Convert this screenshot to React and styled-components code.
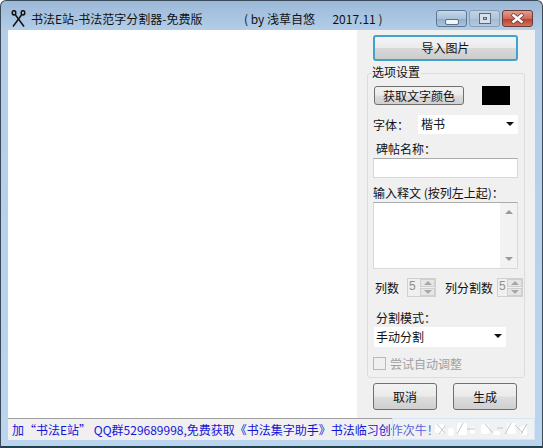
import styled, { createGlobalStyle } from 'styled-components';

const Global = createGlobalStyle`
    html, body {
        margin: 0;
        padding: 0;
        background: #ffffff;
    }
    * {
        box-sizing: border-box;
    }
`;

const FONT = `"Noto Sans CJK SC", "Liberation Sans", sans-serif`;

function Scissors() {
    return (
        <svg width="15" height="17" viewBox="0 0 15 17" fill="none" stroke="#111" strokeWidth="1.5">
            <path d="M2 16.5 L10.5 5" />
            <path d="M13 16.5 L4.5 5" />
            <ellipse cx="3" cy="2.8" rx="1.8" ry="2.1" />
            <ellipse cx="12" cy="2.8" rx="1.8" ry="2.1" />
        </svg>
    );
}

function CloseGlyph() {
    return (
        <svg width="15" height="11" viewBox="0 0 15 11">
            <path d="M2 1 L13 10 M13 1 L2 10" stroke="#6d3a33" strokeWidth="4" />
            <path d="M2.5 1.5 L12.5 9.5 M12.5 1.5 L2.5 9.5" stroke="#ffffff" strokeWidth="2.6" />
        </svg>
    );
}

function Arrow({ up, color = "#111" }) {
    return (
        <svg width="8" height="4" viewBox="0 0 8 4">
            <path d={up ? "M4 0 L8 4 L0 4 Z" : "M0 0 L8 0 L4 4 Z"} fill={color} />
        </svg>
    );
}

function Spinner({ value, width }) {
    return (
        <Spin $width={width}>
            <SpinValue>{value}</SpinValue>
            <SpinButtons>
                <SpinButton><Arrow up color="#a8a8a8" /></SpinButton>
                <SpinButton><Arrow color="#a8a8a8" /></SpinButton>
            </SpinButtons>
        </Spin>
    );
}

// 水印的模糊字迹
function Smudge() {
    const marks = [
        [12, 5, 9, 9], [25, 9, 6, 8], [34, 4, 10, 12], [47, 8, 5, 7],
        [58, 5, 8, 10], [70, 12, 7, 4], [84, 4, 9, 11], [97, 7, 7, 9],
    ];
    return (
        <svg width="141" height="20" viewBox="0 0 141 20">
            {marks.map(([x, y, w, h]) => (
                <rect key={x} x={x + 30} y={y} width={w} height={h} rx="2" fill="#ffffff" />
            ))}
            <path
                d="M44 5 L52 14 M52 7 L46 15 M70 4 L64 15 M74 10 L82 10 M92 5 L100 14 M104 9 L110 9 M118 4 L112 15 M122 6 L130 14 M134 5 L128 15"
                stroke="#c4c7cb"
                strokeWidth="1"
            />
        </svg>
    );
}

export default function App() {
    return (
        <>
            <Global />
            <Window>
                <TitleBar>
                    <Scissors />
                    <TitleText>书法E站-书法范字分割器-免费版</TitleText>
                    <TitleBy>( by 浅草自悠　  2017.11 )</TitleBy>
                    <Controls>
                        <Control><MinGlyph /></Control>
                        <Control $muted><MaxGlyph /></Control>
                        <CloseControl><CloseGlyph /></CloseControl>
                    </Controls>
                </TitleBar>
                <Client>
                    <Canvas />
                    <Panel>
                        <ImportButton>导入图片</ImportButton>
                        <Group>
                            <Legend>选项设置</Legend>
                            <ColorRow>
                                <ColorButton>获取文字颜色</ColorButton>
                                <Swatch />
                            </ColorRow>
                            <FontRow>
                                <FontLabel>字体：</FontLabel>
                                <Select $width="100px">
                                    楷书
                                    <Arrow />
                                </Select>
                            </FontRow>
                            <FieldLabel $indent="3px" $top="6px">碑帖名称：</FieldLabel>
                            <TextInput />
                            <FieldLabel $top="6px">输入释文 (按列左上起)：</FieldLabel>
                            <TextArea>
                                <Scrollbar>
                                    <Arrow up color="#9a9a9a" />
                                    <Arrow color="#9a9a9a" />
                                </Scrollbar>
                            </TextArea>
                            <SpinRow>
                                <SpinLabel>列数</SpinLabel>
                                <Spinner value="5" width="29px" />
                                <SpinLabel $left="9px">列分割数</SpinLabel>
                                <Spinner value="5" width="26px" />
                            </SpinRow>
                            <FieldLabel $indent="3px" $top="12px">分割模式：</FieldLabel>
                            <ModeSelect>
                                手动分割
                                <Arrow />
                            </ModeSelect>
                            <CheckRow>
                                <CheckBox />
                                尝试自动调整
                            </CheckRow>
                        </Group>
                        <Actions>
                            <ActionButton>取消</ActionButton>
                            <ActionButton>生成</ActionButton>
                        </Actions>
                    </Panel>
                    <Status>加“书法E站” QQ群529689998,免费获取《书法集字助手》书法临习创作次牛！</Status>
                    <Watermark><Smudge /></Watermark>
                </Client>
            </Window>
        </>
    );
}

const Window = styled.div`
    width: 543px;
    height: 448px;
    display: flex;
    flex-direction: column;
    padding: 0 7px 6px;
    border-radius: 6px 6px 0 0;
    border: 1px solid #3b4a58;
    border-bottom: 2px solid #23404f;
    background: linear-gradient(180deg, #9cb9d8 0%, #b4cee8 30px, #bcd5ee 100%);
    font-family: ${FONT};
    font-size: 12px;
    color: #111;
`;

const TitleBar = styled.div`
    height: 29px;
    flex: none;
    display: flex;
    align-items: center;
    padding-top: 6px;
    margin-left: 3px;
`;

const TitleText = styled.div`
    margin-left: 5px;
    width: 213px;
    white-space: nowrap;
`;

const TitleBy = styled.div`
    white-space: pre;
`;

const Controls = styled.div`
    margin-left: auto;
    margin-right: 2px;
    display: flex;
    gap: 2px;
`;

const Control = styled.div`
    width: 31px;
    height: 17px;
    border: 1px solid ${props => props.$muted ? "#8aa0b6" : "#5d7893"};
    border-radius: 3px;
    background: ${props => props.$muted
        ? "linear-gradient(180deg, #c2d3e4 0%, #b2c6da 50%, #a5bbd2 52%, #b2c8de 100%)"
        : "linear-gradient(180deg, #c6d8ea 0%, #a9c1da 50%, #93aecb 52%, #a8c3dd 100%)"};
    display: flex;
    align-items: center;
    justify-content: center;
`;

const MinGlyph = styled.div`
    width: 12px;
    height: 4px;
    margin-top: 6px;
    border-radius: 1px;
    background: #f2f5f9;
    outline: 1px solid #5d7086;
`;

const MaxGlyph = styled.div`
    width: 10px;
    height: 9px;
    border: 3px solid #d5e0eb;
    outline: 1px solid #56687d;
    box-shadow: inset 0 0 0 1px #56687d;
`;

const CloseControl = styled.div`
    width: 31px;
    height: 17px;
    border: 1px solid #6b3a34;
    border-radius: 3px;
    background: linear-gradient(180deg, #e0a08f 0%, #cf6a58 50%, #b83d2c 52%, #cf7561 100%);
    display: flex;
    align-items: center;
    justify-content: center;
`;

const Client = styled.div`
    position: relative;
    flex: 1;
    min-height: 0;
    display: grid;
    grid-template-columns: 349px 1fr;
    grid-template-rows: 1fr 22px;
    background: #f0f0f0;
`;

const Canvas = styled.div`
    background: #ffffff;
`;

const Panel = styled.div`
    grid-row: 1 / 3;
    padding: 5px 0 0 16px;
    display: flex;
    flex-direction: column;
    align-items: flex-start;
`;

const ImportButton = styled.button`
    width: 145px;
    height: 26px;
    flex: none;
    border: 2px solid #3fa3cc;
    border-radius: 3px;
    background: linear-gradient(180deg, #f4f4f4 0%, #ebebeb 48%, #d8d8d8 52%, #cdcdcd 100%);
    font: inherit;
    color: #111;
    padding: 0 0 2px;
`;

const Group = styled.div`
    position: relative;
    width: 158px;
    height: 305px;
    margin: 12px 0 0 -6px;
    padding: 12px 0 0 5px;
    border: 1px solid #dcdcdc;
    border-radius: 3px;
    display: flex;
    flex-direction: column;
    align-items: flex-start;
`;

const Legend = styled.div`
    position: absolute;
    top: -11px;
    left: 4px;
    background: #f0f0f0;
    padding-right: 1px;
    line-height: 17px;
`;

const ColorRow = styled.div`
    display: flex;
    align-items: center;
    margin-left: 1px;
`;

const ColorButton = styled.button`
    width: 90px;
    height: 19px;
    padding: 0;
    border: 1px solid #707070;
    border-radius: 3px;
    background: linear-gradient(180deg, #f2f2f2 0%, #ebebeb 48%, #dddddd 52%, #cfcfcf 100%);
    font: inherit;
    line-height: 15px;
    color: #111;
`;

const Swatch = styled.div`
    width: 28px;
    height: 19px;
    margin: -1px 0 0 18px;
    background: #000000;
`;

const FontRow = styled.div`
    display: flex;
    align-items: center;
    margin-top: 10px;
`;

const FontLabel = styled.div`
    width: 45px;
`;

const Select = styled.div`
    width: ${props => props.$width};
    height: 19px;
    padding: 0 4px 2px 3px;
    background: #ffffff;
    display: flex;
    align-items: center;
    justify-content: space-between;
    line-height: 17px;
`;

const ModeSelect = styled(Select)`
    width: 132px;
    height: 20px;
    margin: 1px 0 0 1px;
    padding-left: 2px;
`;

const FieldLabel = styled.div`
    margin: ${props => props.$top} 0 0 ${props => props.$indent || "0"};
    line-height: 17px;
    white-space: nowrap;
`;

const TextInput = styled.div`
    width: 145px;
    height: 20px;
    margin-top: 1px;
    background: #ffffff;
    border: 1px solid #d8d8d8;
    border-top-color: #ababab;
`;

const TextArea = styled.div`
    width: 145px;
    height: 67px;
    margin-top: 1px;
    background: #ffffff;
    border: 1px solid #d8d8d8;
    border-top-color: #ababab;
    display: flex;
    justify-content: flex-end;
`;

const Scrollbar = styled.div`
    width: 17px;
    background: #f2f2f2;
    padding: 7px 0;
    display: flex;
    flex-direction: column;
    align-items: center;
    justify-content: space-between;
`;

const SpinRow = styled.div`
    display: flex;
    align-items: center;
    margin: 9px 0 0 2px;
    white-space: nowrap;
`;

const SpinLabel = styled.div`
    margin: 0 ${props => props.$left ? "4px" : "8px"} 0 ${props => props.$left || "0"};
`;

const Spin = styled.div`
    display: flex;
    width: ${props => props.$width};
    height: 19px;
    border: 1px solid #d0d0d0;
    background: #f0f0f0;
    flex: none;
`;

const SpinValue = styled.div`
    flex: 1;
    padding-left: 1px;
    line-height: 15px;
    font-family: "Liberation Sans", sans-serif;
    color: #8f8f8f;
`;

const SpinButtons = styled.div`
    width: 15px;
    display: flex;
    flex-direction: column;
    gap: 1px;
`;

const SpinButton = styled.div`
    flex: 1;
    background: #e6e6e6;
    border: 1px solid #cfcfcf;
    display: flex;
    align-items: center;
    justify-content: center;
`;

const CheckRow = styled.div`
    display: flex;
    align-items: center;
    gap: 4px;
    margin-top: 8px;
    color: #a0a0a0;
`;

const CheckBox = styled.div`
    width: 13px;
    height: 13px;
    border: 1px solid #b9b9b9;
    background: #f0f0f0;
`;

const Actions = styled.div`
    display: flex;
    gap: 16px;
    margin-top: 5px;
`;

const ActionButton = styled.button`
    width: 64px;
    height: 27px;
    padding: 0;
    border: 1px solid #707070;
    border-radius: 3px;
    background: linear-gradient(180deg, #f2f2f2 0%, #ebebeb 48%, #dddddd 52%, #cfcfcf 100%);
    font: inherit;
    color: #111;
`;

const Status = styled.div`
    grid-column: 1;
    grid-row: 2;
    width: 384px;
    border-top: 1px solid #a0a0a0;
    padding: 1px 0 0 4px;
    background: #f0f0f0;
    color: #1414d8;
    white-space: nowrap;
    line-height: 19px;
    z-index: 1;
`;

const Watermark = styled.div`
    position: absolute;
    right: 0;
    bottom: 0;
    width: 143px;
    height: 22px;
    background: rgba(240, 244, 250, 0.3);
    border: 1px solid #d5e6f4;
    z-index: 2;
`;
